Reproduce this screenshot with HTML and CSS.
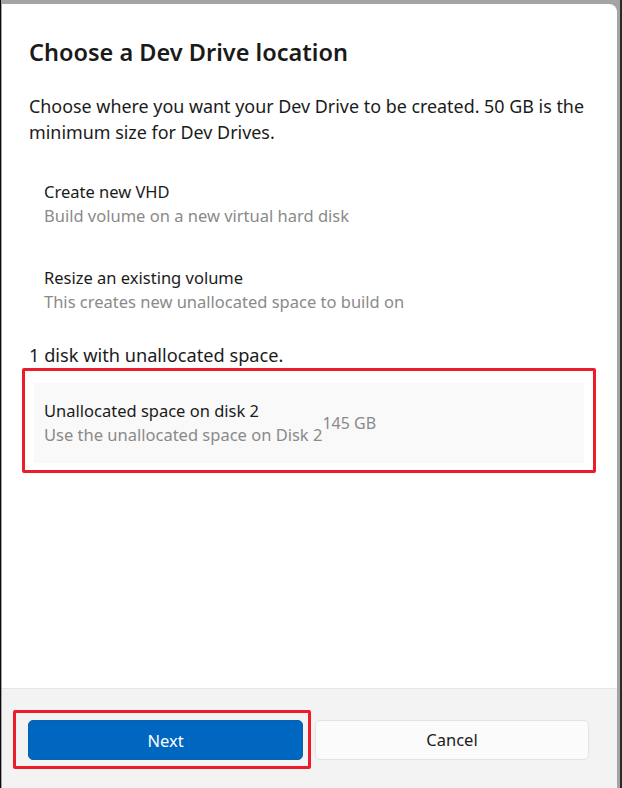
FILE: index.html
```html
<!DOCTYPE html>
<html>
<head>
<meta charset="utf-8">
<link rel="stylesheet" href="styles.css">
</head>
<body>
<div class="screen">
  <div class="dialog">
    <div class="content">
      <h1 class="title">Choose a Dev Drive location</h1>
      <p class="intro">Choose where you want your Dev Drive to be created. 50 GB is the minimum size for Dev Drives.</p>
      <div class="options">
        <div class="option">
          <div class="opt-title">Create new VHD</div>
          <div class="opt-sub">Build volume on a new virtual hard disk</div>
        </div>
        <div class="option">
          <div class="opt-title">Resize an existing volume</div>
          <div class="opt-sub">This creates new unallocated space to build on</div>
        </div>
      </div>
      <div class="disk-label">1 disk with unallocated space.</div>
      <div class="highlight highlight-item">
        <div class="disk-item">
          <div class="disk-text">
            <div class="opt-title">Unallocated space on disk 2</div>
            <div class="opt-sub">Use the unallocated space on Disk 2</div>
          </div>
          <div class="disk-size">145 GB</div>
        </div>
      </div>
    </div>
    <div class="footer">
      <div class="highlight highlight-btn">
        <button class="btn btn-primary">Next</button>
      </div>
      <button class="btn btn-secondary">Cancel</button>
    </div>
  </div>
</div>
</body>
</html>
```
FILE: styles.css
```css
html, body {
  margin: 0;
  padding: 0;
  height: 100%;
}
body {
  background: #a4a4a4;
  font-family: "Noto Sans", "Open Sans", sans-serif;
  color: #1b1b1b;
}
.screen {
  height: 788px;
  border-left: 1px solid #0a0a0a;
  border-right: 2px solid #2a2a2a;
  padding-top: 4px;
  padding-left: 1px;
  padding-right: 3px;
  box-sizing: border-box;
  display: flex;
  flex-direction: column;
}
.dialog {
  flex: 1;
  background: #ffffff;
  border-top-right-radius: 8px;
  display: flex;
  flex-direction: column;
  overflow: hidden;
}
.content {
  flex: 1;
  padding: 33px 0 0 27px;
  display: flex;
  flex-direction: column;
}
.title {
  margin: 0;
  font-size: 23.5px;
  font-weight: 600;
  line-height: 30px;
  color: #1a1a1a;
}
.intro {
  margin: 26px 0 0 0;
  font-size: 17.9px;
  line-height: 26px;
}
.options {
  margin-top: 35px;
  margin-left: 15px;
  display: flex;
  flex-direction: column;
  gap: 38px;
}
.option {
  display: flex;
  flex-direction: column;
}
.opt-title {
  font-size: 16.5px;
  line-height: 24px;
  color: #1b1b1b;
}
.opt-sub {
  font-size: 16.5px;
  line-height: 24px;
  color: #8a8a8a;
}
.disk-label {
  margin-top: 29px;
  font-size: 18.2px;
  line-height: 24px;
}
.highlight {
  border: 3px solid #ec1c2a;
  border-radius: 2px;
}
.highlight-item {
  margin: 1px 21px 0 -7px;
  padding: 12px 9px 7px 9px;
}
.disk-item {
  background: #f9f9f9;
  height: 80px;
  padding: 0 10px;
  display: flex;
  align-items: center;
}
.disk-text {
  display: flex;
  flex-direction: column;
}
.disk-size {
  font-size: 16px;
  color: #8a8a8a;
}
.footer {
  height: 100px;
  background: #f3f3f3;
  border-top: 1px solid #e5e5e5;
  display: flex;
  align-items: center;
  padding: 2px 28px 0 11px;
  gap: 4px;
  box-sizing: border-box;
}
.highlight-btn {
  padding: 7px 5px 6px 12px;
  flex: 0 0 auto;
}
.btn {
  height: 40px;
  border-radius: 5px;
  font-family: "Noto Sans", "Open Sans", sans-serif;
  font-size: 16.5px;
  cursor: pointer;
}
.btn-primary {
  width: 275px;
  background: #0067c0;
  color: #ffffff;
  border: 1px solid #0a5fae;
  display: block;
}
.btn-secondary {
  flex: 1;
  background: #fbfbfb;
  color: #1b1b1b;
  border: 1px solid #e3e3e3;
}
```
